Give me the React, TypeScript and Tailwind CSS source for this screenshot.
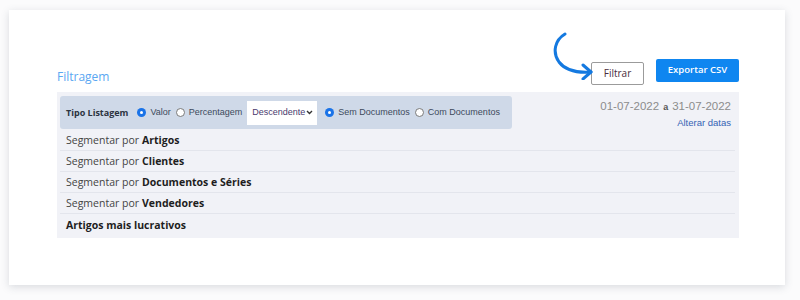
import type { ReactNode } from "react";

const Radio = ({ checked, children }: { checked?: boolean; children: ReactNode }) => (
  <label className="flex shrink-0 items-center gap-[4px] font-['Liberation_Sans',sans-serif] text-[9px] text-[#3d4a5c]">
    {checked ? (
      <span className="flex h-[9px] w-[9px] items-center justify-center rounded-full bg-[#1a73e8]">
        <span className="h-[3px] w-[3px] rounded-full bg-white" />
      </span>
    ) : (
      <span className="h-[9px] w-[9px] rounded-full border border-[#7a7a7a] bg-white" />
    )}
    <span>{children}</span>
  </label>
);

const rows: { pre?: string; bold: string }[] = [
  { pre: "Segmentar por", bold: "Artigos" },
  { pre: "Segmentar por", bold: "Clientes" },
  { pre: "Segmentar por", bold: "Documentos e Séries" },
  { pre: "Segmentar por", bold: "Vendedores" },
  { bold: "Artigos mais lucrativos" },
];

const CurvedArrow = () => (
  <svg
    className="absolute left-[-40px] top-[-27px]"
    width="44"
    height="48"
    viewBox="0 0 44 48"
    fill="none"
    stroke="#1479e0"
    strokeWidth="3"
    strokeLinecap="round"
    strokeLinejoin="round"
  >
    <path d="M14 2 C 4 8, 1 20, 8 30 C 14 38, 26 41, 40 40" />
    <path d="M32 33 L 40 40 L 32 47" />
  </svg>
);

export default function App() {
  return (
    <div className="h-[300px] w-[800px] bg-[#fbfbfc] pl-[9px] pr-[15px] pt-[10px] font-['Open_Sans',sans-serif]">
      <div className="h-[275px] bg-white pl-[48px] pr-[46px] pt-[49px] shadow-[0_2px_8px_rgba(60,70,90,0.18)]">
        <div className="flex items-end justify-between">
          <h2 className="text-[12px] leading-[16px] text-[#5aa7f2]">Filtragem</h2>
          <div className="flex gap-[12px]">
            <div className="relative">
              <CurvedArrow />
              <button className="h-[23px] w-[53px] rounded-[2px] border border-[#9b9b9b] bg-white text-[10px] text-[#4a2b3b]">
                Filtrar
              </button>
            </div>
            <button className="h-[23px] w-[83px] rounded-[2px] bg-[#0f86f0] text-[9.5px] font-semibold text-white">
              Exportar CSV
            </button>
          </div>
        </div>

        <div className="mt-[7px] bg-[#f1f2f7] pb-[3px]">
          <div className="flex items-start justify-between pl-[3px] pr-[8px] pt-[4px]">
            <div className="flex h-[33px] items-center gap-[5px] rounded-[3px] bg-[#cfd9e8] pl-[6px] pr-[12px]">
              <span className="mr-[4px] shrink-0 text-[9px] font-bold text-[#2b3340]">Tipo Listagem</span>
              <Radio checked>Valor</Radio>
              <Radio>Percentagem</Radio>
              <div className="mr-[3px] flex h-[24px] w-[70px] shrink-0 items-center justify-between bg-white pl-[5px] pr-[4px] font-['Liberation_Sans',sans-serif] text-[9px] text-[#4b3b6e]">
                <span>Descendente</span>
                <svg width="7" height="5" viewBox="0 0 7 5">
                  <path d="M1 1 L3.5 3.5 L6 1" stroke="#333" strokeWidth="1.4" fill="none" />
                </svg>
              </div>
              <Radio checked>Sem Documentos</Radio>
              <Radio>Com Documentos</Radio>
            </div>
            <div className="flex flex-col items-end pt-[1px] font-['Liberation_Sans',sans-serif]">
              <div className="flex items-baseline gap-[4px] text-[11.5px] leading-[18px] text-[#8c8c8c]">
                <span>01-07-2022</span>
                <span className="text-[9px] font-bold text-[#555]">a</span>
                <span>31-07-2022</span>
              </div>
              <a className="text-[9.5px] leading-[13px] text-[#3563b5]">Alterar datas</a>
            </div>
          </div>

          <div className="ml-[3px] mr-[4px] mt-[1px]">
            {rows.map((r, i) => (
              <div
                key={i}
                className={`flex h-[21px] items-center gap-[3px] pl-[6px] pt-[2px] text-[10.5px] ${
                  i < rows.length - 1 ? "border-b border-[#e3e5ec]" : ""
                }`}
              >
                {r.pre && <span className="text-[#444]">{r.pre}</span>}
                <span className="font-bold text-[#1e1e1e]">{r.bold}</span>
              </div>
            ))}
          </div>
        </div>
      </div>
    </div>
  );
}
